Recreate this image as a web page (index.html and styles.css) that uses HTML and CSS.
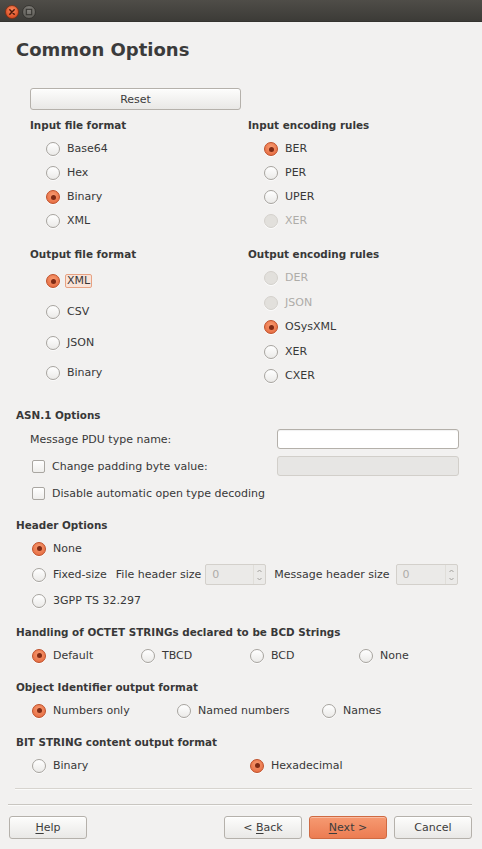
FILE: index.html
```html
<!DOCTYPE html>
<html>
<head>
<meta charset="utf-8">
<title>Common Options</title>
<link rel="stylesheet" href="styles.css">
</head>
<body>
<div class="window">
  <div class="titlebar">
    <svg class="wbtns" width="44" height="22" viewBox="0 0 44 22">
      <defs>
        <radialGradient id="gc" cx="50%" cy="35%" r="65%">
          <stop offset="0" stop-color="#f7875c"/>
          <stop offset="1" stop-color="#d9491f"/>
        </radialGradient>
        <radialGradient id="gg" cx="50%" cy="35%" r="65%">
          <stop offset="0" stop-color="#85837e"/>
          <stop offset="1" stop-color="#5e5c57"/>
        </radialGradient>
      </defs>
      <circle cx="12" cy="12" r="6.5" fill="url(#gc)" stroke="#7a2c12" stroke-width="0.8"/>
      <path d="M9.8 9.8 L14.2 14.2 M14.2 9.8 L9.8 14.2" stroke="#4b1809" stroke-width="1.5" stroke-linecap="round"/>
      <circle cx="29" cy="12" r="6.5" fill="url(#gg)" stroke="#2e2d2a" stroke-width="0.8"/>
      <rect x="26.3" y="9.3" width="5.4" height="5.4" fill="none" stroke="#3a3935" stroke-width="1.2"/>
    </svg>
  </div>

  <div class="content">
    <h1 class="title">Common Options</h1>

    <button class="btn reset">Reset</button>

    <div class="top">
      <div class="grid2 g1">
        <div class="col">
          <div class="glabel">Input file format</div>
          <div class="opt"><span class="radio"></span><span class="lbl">Base64</span></div>
          <div class="opt"><span class="radio"></span><span class="lbl">Hex</span></div>
          <div class="opt"><span class="radio on"></span><span class="lbl">Binary</span></div>
          <div class="opt"><span class="radio"></span><span class="lbl">XML</span></div>
        </div>
        <div class="col">
          <div class="glabel">Input encoding rules</div>
          <div class="opt"><span class="radio on"></span><span class="lbl">BER</span></div>
          <div class="opt"><span class="radio"></span><span class="lbl">PER</span></div>
          <div class="opt"><span class="radio"></span><span class="lbl">UPER</span></div>
          <div class="opt"><span class="radio dis"></span><span class="lbl dis-t">XER</span></div>
        </div>
      </div>

      <div class="grid2 g2">
        <div class="col">
          <div class="glabel">Output file format</div>
          <div class="stack">
            <div class="opt"><span class="radio on"></span><span class="lbl focus">XML</span></div>
            <div class="opt"><span class="radio"></span><span class="lbl">CSV</span></div>
            <div class="opt"><span class="radio"></span><span class="lbl">JSON</span></div>
            <div class="opt"><span class="radio"></span><span class="lbl">Binary</span></div>
          </div>
        </div>
        <div class="col">
          <div class="glabel">Output encoding rules</div>
          <div class="stack">
            <div class="opt"><span class="radio dis"></span><span class="lbl dis-t">DER</span></div>
            <div class="opt"><span class="radio dis"></span><span class="lbl dis-t">JSON</span></div>
            <div class="opt"><span class="radio on"></span><span class="lbl">OSysXML</span></div>
            <div class="opt"><span class="radio"></span><span class="lbl">XER</span></div>
            <div class="opt"><span class="radio"></span><span class="lbl">CXER</span></div>
          </div>
        </div>
      </div>
    </div>

    <section class="sec sec-asn">
      <div class="slabel">ASN.1 Options</div>
      <div class="arow"><span class="plain">Message PDU type name:</span><span class="field"></span></div>
      <div class="arow"><span class="check"></span><span class="plain">Change padding byte value:</span><span class="field field-dis"></span></div>
      <div class="arow"><span class="check"></span><span class="plain">Disable automatic open type decoding</span></div>
    </section>

    <section class="sec sec-hdr">
      <div class="slabel">Header Options</div>
      <div class="hrow"><span class="radio on"></span><span class="lbl">None</span></div>
      <div class="hrow">
        <span class="radio"></span><span class="lbl">Fixed-size</span>
        <span class="plain fh">File header size</span>
        <span class="spin sp1"><span class="sv">0</span><span class="arrows"><svg width="7" height="16" viewBox="0 0 7 16"><path d="M1.5 5 L3.5 3 L5.5 5" fill="none" stroke="#a3a19d" stroke-width="1"/><path d="M1.5 11 L3.5 13 L5.5 11" fill="none" stroke="#a3a19d" stroke-width="1"/></svg></span></span>
        <span class="plain mh">Message header size</span>
        <span class="spin sp2"><span class="sv">0</span><span class="arrows"><svg width="7" height="16" viewBox="0 0 7 16"><path d="M1.5 5 L3.5 3 L5.5 5" fill="none" stroke="#a3a19d" stroke-width="1"/><path d="M1.5 11 L3.5 13 L5.5 11" fill="none" stroke="#a3a19d" stroke-width="1"/></svg></span></span>
      </div>
      <div class="hrow"><span class="radio"></span><span class="lbl">3GPP TS 32.297</span></div>
    </section>

    <section class="sec sec-opt sec-first">
      <div class="slabel">Handling of OCTET STRINGs declared to be BCD Strings</div>
      <div class="rows cols4">
        <div class="opt"><span class="radio on"></span><span class="lbl">Default</span></div>
        <div class="opt"><span class="radio"></span><span class="lbl">TBCD</span></div>
        <div class="opt"><span class="radio"></span><span class="lbl">BCD</span></div>
        <div class="opt"><span class="radio"></span><span class="lbl">None</span></div>
      </div>
    </section>

    <section class="sec sec-opt">
      <div class="slabel">Object Identifier output format</div>
      <div class="rows cols3">
        <div class="opt"><span class="radio on"></span><span class="lbl">Numbers only</span></div>
        <div class="opt"><span class="radio"></span><span class="lbl">Named numbers</span></div>
        <div class="opt"><span class="radio"></span><span class="lbl">Names</span></div>
      </div>
    </section>

    <section class="sec sec-opt">
      <div class="slabel">BIT STRING content output format</div>
      <div class="rows cols2">
        <div class="opt"><span class="radio"></span><span class="lbl">Binary</span></div>
        <div class="opt"><span class="radio on"></span><span class="lbl">Hexadecimal</span></div>
      </div>
    </section>

    <div class="sep1"></div>
  </div>

  <div class="footer">
    <div class="sep2"></div>
    <div class="btnrow">
      <button class="btn fbtn"><u>H</u>elp</button>
      <div class="navbtns">
        <button class="btn fbtn">&lt; <u>B</u>ack</button>
        <button class="btn fbtn next"><u>N</u>ext &gt;</button>
        <button class="btn fbtn">Cancel</button>
      </div>
    </div>
  </div>
</div>
</body>
</html>
```

FILE: styles.css
```css
* { box-sizing: border-box; }
html, body { margin: 0; padding: 0; }
body {
  width: 482px;
  height: 849px;
  overflow: hidden;
  font-family: "DejaVu Sans", sans-serif;
  font-size: 11px;
  color: #383838;
  background: #f2f1f0;
}
.window {
  width: 482px;
  height: 849px;
  display: flex;
  flex-direction: column;
  background: #f2f1f0;
}
.titlebar {
  height: 22px;
  flex: none;
  background: linear-gradient(#4f4d48, #3c3b37);
  border-bottom: 1px solid #34332f;
}
.wbtns { display: block; }

.content {
  flex: 1;
  display: flex;
  flex-direction: column;
  padding: 0 10px 0 16px;
}
.title {
  margin: 16px 0 0;
  font-size: 18px;
  line-height: 24px;
  font-weight: bold;
  color: #3b3b3b;
}
.btn {
  font-family: inherit;
  font-size: 11px;
  color: #3c3c3c;
  border: 1px solid #b5b1ab;
  border-radius: 3px;
  background: linear-gradient(#fdfdfc, #e9e8e6);
  padding: 0;
  box-shadow: inset 0 1px 0 #ffffff;
}
.btn u { text-decoration-thickness: 1px; text-underline-offset: 2px; }
.reset {
  align-self: flex-start;
  margin: 26px 0 0 14px;
  width: 211px;
  height: 22px;
}

.top { padding-left: 14px; }
.grid2 { display: grid; grid-template-columns: 218px 1fr; }
.g1 { margin-top: 3px; }
.g2 { margin-top: 9px; }
.glabel, .slabel {
  font-weight: bold;
  font-size: 10.4px;
  line-height: 24px;
  height: 24px;
  white-space: nowrap;
}
.opt {
  display: flex;
  align-items: center;
  height: 24px;
  white-space: nowrap;
}
.col .opt { padding-left: 16px; }
.stack {
  display: flex;
  flex-direction: column;
  height: 122.5px;
}
.stack .opt { flex: 1; height: auto; }

.radio {
  flex: none;
  position: relative;
  width: 14px;
  height: 14px;
  border-radius: 50%;
  border: 1px solid #a7a49f;
  background: linear-gradient(#ffffff, #ebeae8);
  box-shadow: 0 1px 0 rgba(255, 255, 255, 0.7);
}
.radio.on {
  border-color: #bf4f28;
  background: radial-gradient(circle at 50% 35%, #f89a70, #e3653a);
}
.radio.on::after {
  content: "";
  position: absolute;
  left: 3.5px;
  top: 3.5px;
  width: 5px;
  height: 5px;
  border-radius: 50%;
  background: #7e2a14;
}
.radio.dis {
  border-color: #d4d1cc;
  background: #e2e0dc;
}
.lbl {
  margin-left: 5px;
  padding: 0 1px;
  border: 1px solid transparent;
  border-radius: 2px;
  line-height: 12px;
}
.lbl.focus {
  border-color: #e7a283;
  background: #f9e3d8;
}
.dis-t { color: #aeaca8; }

.sec { margin-top: 7px; }
.sec-asn { margin-top: 15px; }
.sec-asn .slabel, .sec-hdr .slabel { height: 22px; line-height: 22px; }
.sec-opt { margin-top: 8px; }
.sec-opt.sec-first { margin-top: 7px; }
.sec-opt .slabel { height: 23px; line-height: 23px; }

.arow {
  display: flex;
  align-items: center;
  height: 27px;
  padding: 0 13px 0 14px;
  white-space: nowrap;
}
.check {
  flex: none;
  width: 13px;
  height: 13px;
  margin: 0 7px 0 2px;
  border: 1px solid #a9a6a1;
  border-radius: 2px;
  background: linear-gradient(#ffffff, #efeeec);
}
.field {
  margin-left: auto;
  width: 182px;
  height: 20px;
  border: 1px solid #b4b0aa;
  border-radius: 3px;
  background: #ffffff;
  box-shadow: inset 0 1px 1px rgba(0, 0, 0, 0.06);
}
.field-dis {
  background: #e7e6e4;
  border-color: #d2cfca;
  box-shadow: none;
}

.hrow {
  display: flex;
  align-items: center;
  height: 26px;
  padding-left: 16px;
  white-space: nowrap;
}
.fh { margin-left: 7px; }
.mh { margin-left: 8px; }
.spin {
  display: flex;
  align-items: stretch;
  height: 21px;
  border: 1px solid #d3d0cb;
  border-radius: 2px;
  background: #ebeae8;
  color: #aeaca8;
}
.sp1 { width: 61px; margin-left: 4px; }
.sp2 { width: 62px; margin-left: 6px; }
.sv { flex: 1; padding-left: 6px; line-height: 19px; }
.arrows {
  width: 12px;
  display: flex;
  align-items: center;
  justify-content: center;
  border-left: 1px solid #e0ded9;
}
.arrows svg { display: block; }

.rows { display: grid; padding-left: 16px; }
.cols4 { grid-template-columns: repeat(4, 109px); }
.cols3 { grid-template-columns: repeat(3, 145px); }
.cols2 { grid-template-columns: repeat(2, 218px); }

.sep1 {
  margin: 10px 0 0 -1px;
  height: 1px;
  background: #d7d4cf;
  box-shadow: 0 1px 0 #fbfbfa;
}

.footer { flex: none; }
.sep2 {
  margin: 0 10px 0 8px;
  height: 1px;
  background: #c9c6c1;
  box-shadow: 0 1px 0 #fbfbfa;
}
.btnrow {
  display: flex;
  justify-content: space-between;
  margin-top: 11px;
  padding: 0 10px 10px 9px;
}
.navbtns { display: flex; gap: 7px; }
.fbtn { width: 78px; height: 23px; }
.next {
  border-color: #cf6a42;
  background: linear-gradient(#f69a72, #ec7c52);
  box-shadow: inset 0 1px 0 rgba(255, 255, 255, 0.35);
}
```
